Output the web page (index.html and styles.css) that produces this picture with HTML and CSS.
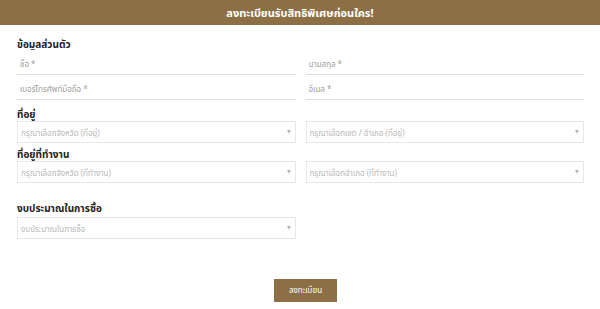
FILE: index.html
```html
<!DOCTYPE html>
<html lang="th">
<head>
    <meta charset="UTF-8">
    <title>ลงทะเบียน</title>
    <link rel="stylesheet" href="styles.css">
</head>
<body>
<div class="topbar">
    <h1>ลงทะเบียนรับสิทธิพิเศษก่อนใคร!</h1>
</div>
<form class="reg">
    <h2 class="label first">ข้อมูลส่วนตัว</h2>
    <div class="pair">
        <input class="line" type="text" placeholder="ชื่อ *">
        <input class="line" type="text" placeholder="นามสกุล *">
        <input class="line" type="text" placeholder="เบอร์โทรศัพท์มือถือ *">
        <input class="line" type="text" placeholder="อีเมล *">
    </div>

    <h2 class="label">ที่อยู่</h2>
    <div class="pair">
        <div class="pick"><select><option>กรุณาเลือกจังหวัด (ที่อยู่)</option></select></div>
        <div class="pick"><select><option>กรุณาเลือกเขต / อำเภอ (ที่อยู่)</option></select></div>
    </div>

    <h2 class="label work">ที่อยู่ที่ทำงาน</h2>
    <div class="pair">
        <div class="pick"><select><option>กรุณาเลือกจังหวัด (ที่ทำงาน)</option></select></div>
        <div class="pick"><select><option>กรุณาเลือกอำเภอ (ที่ทำงาน)</option></select></div>
    </div>

    <h2 class="label budget">งบประมาณในการซื้อ</h2>
    <div class="pair">
        <div class="pick"><select><option>งบประมาณในการซื้อ</option></select></div>
    </div>

    <div class="submit-row">
        <button type="button" class="btn">ลงทะเบียน</button>
    </div>
</form>
</body>
</html>
```

FILE: styles.css
```css
* {
    margin: 0;
    padding: 0;
    box-sizing: border-box;
}
body {
    font-family: "Noto Sans", "Noto Sans Thai", "DejaVu Sans", sans-serif;
    background: #ffffff;
    color: #222222;
}

/* แถบหัวสีน้ำตาล */
.topbar {
    height: 25px;
    background: #8c6f45;
    display: flex;
    align-items: center;
    justify-content: center;
}
.topbar h1 {
    font-size: 11px;
    font-weight: bold;
    color: #ffffff;
    line-height: 14px;
}

.reg {
    padding: 0 16px 0 17px;
}
.label {
    font-size: 10px;
    font-weight: bold;
    line-height: 11px;
    margin-top: 9px;
    margin-bottom: 1px;
}
.label.first {
    margin-top: 14px;
    margin-bottom: 0;
}
.label.work {
    margin-top: 5px;
}
.label.budget {
    margin-top: 19px;
    margin-bottom: 3px;
}
.pair {
    display: grid;
    grid-template-columns: 1fr 1fr;
    column-gap: 10px;
}

/* ช่องกรอกแบบเส้นใต้ */
.line {
    display: block;
    width: 100%;
    height: 25px;
    border: none;
    border-bottom: 1px solid #dddddd;
    padding: 3px 3px 0;
    font-family: inherit;
    font-size: 8px;
    color: #333;
    outline: none;
}
.line::placeholder {
    color: #a0a0a0;
}

/* ช่องเลือก */
.pick {
    position: relative;
    margin-bottom: 1px;
}
.pick select {
    display: block;
    width: 100%;
    height: 22px;
    border: 1px solid #e8e8e8;
    background: #ffffff;
    -webkit-appearance: none;
    appearance: none;
    padding: 0 3px;
    font-family: inherit;
    font-size: 8px;
    color: #b8b8b8;
    outline: none;
}
.pick::after {
    content: "";
    position: absolute;
    right: 5px;
    top: 9px;
    border-left: 2.5px solid transparent;
    border-right: 2.5px solid transparent;
    border-top: 4px solid #b8b8b8;
}

.submit-row {
    display: flex;
    justify-content: center;
    padding-left: 10px;
    margin-top: 39px;
}
.btn {
    width: 63px;
    height: 23px;
    border: none;
    background: #8c6f45;
    color: #ffffff;
    font-family: inherit;
    font-size: 8px;
}
```
